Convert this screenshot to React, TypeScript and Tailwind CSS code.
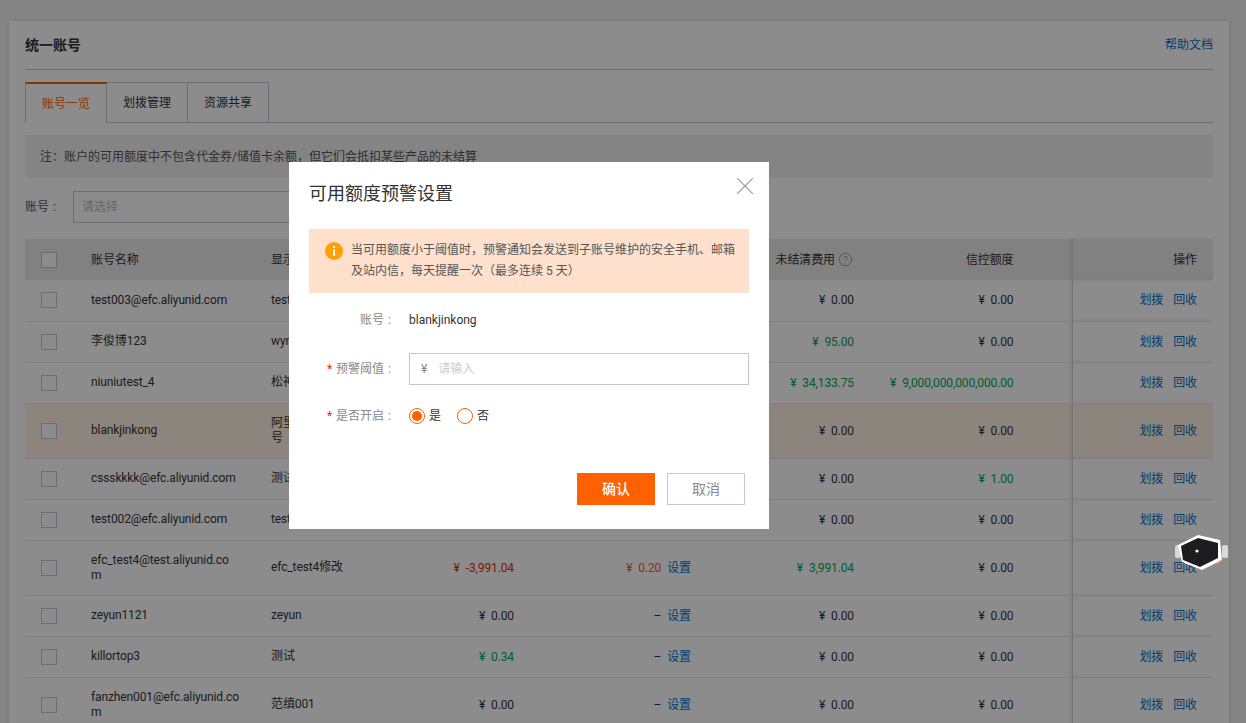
import { CircleHelp } from "lucide-react";

type Row = {
  name: string;
  display: string;
  avail: string;
  availTone?: string;
  warn: string;
  warnTone?: string;
  unpaid: string;
  unpaidTone?: string;
  credit: string;
  creditTone?: string;
  active?: boolean;
};

const green = "text-[#00a854]";
const red = "text-[#e62c00]";
const orange = "text-[#ff6000]";

const rows: Row[] = [
  { name: "test003@efc.aliyunid.com", display: "test003", avail: "0.00", warn: "–", unpaid: "0.00", credit: "0.00" },
  { name: "李俊博123", display: "wyn", avail: "0.00", warn: "–", unpaid: "95.00", unpaidTone: green, credit: "0.00" },
  { name: "niuniutest_4", display: "松神", avail: "0.00", warn: "–", unpaid: "34,133.75", unpaidTone: green, credit: "9,000,000,000,000.00", creditTone: green },
  { name: "blankjinkong", display: "阿里云账号测试号", avail: "0.00", warn: "–", unpaid: "0.00", credit: "0.00", active: true },
  { name: "cssskkkk@efc.aliyunid.com", display: "测试", avail: "0.00", warn: "–", unpaid: "0.00", credit: "1.00", creditTone: green },
  { name: "test002@efc.aliyunid.com", display: "test002", avail: "0.00", warn: "–", unpaid: "0.00", credit: "0.00" },
  { name: "efc_test4@test.aliyunid.com", display: "efc_test4修改", avail: "-3,991.04", availTone: red, warn: "0.20", warnTone: orange, unpaid: "3,991.04", unpaidTone: green, credit: "0.00" },
  { name: "zeyun1121", display: "zeyun", avail: "0.00", warn: "–", unpaid: "0.00", credit: "0.00" },
  { name: "killortop3", display: "测试", avail: "0.34", availTone: green, warn: "–", unpaid: "0.00", credit: "0.00" },
  { name: "fanzhen001@efc.aliyunid.com", display: "范缜001", avail: "0.00", warn: "–", unpaid: "0.00", credit: "0.00" },
];

function Checkbox() {
  return <div className="h-4 w-4 border border-[#c4c6cf] bg-white" />;
}

function Money({ value }: { value: string }) {
  if (value === "–") return <span>–</span>;
  return (
    <span>
      <span className="mr-[6px]">¥</span>
      {value}
    </span>
  );
}

function AccountTable() {
  return (
    <table className="w-[1188px] table-fixed text-xs tracking-[-0.12px] text-[#333]">
      <colgroup>
        <col className="w-[50px]" />
        <col className="w-[180px]" />
        <col className="w-[125px]" />
        <col className="w-[150px]" />
        <col className="w-[177px]" />
        <col className="w-[163px]" />
        <col className="w-[202px]" />
        <col className="w-[141px]" />
      </colgroup>
      <thead>
        <tr className="h-[41px] bg-[#ebebeb]">
          <th className="pl-4 font-normal"><Checkbox /></th>
          <th className="px-4 text-left font-normal">账号名称</th>
          <th className="px-4 text-left font-normal">显示名称</th>
          <th className="px-4 text-right font-normal">可用额度</th>
          <th className="px-4 text-right font-normal">预警阈值</th>
          <th className="pr-[17px] font-normal">
            <div className="flex items-center justify-end gap-[3px]">
              未结清费用
              <CircleHelp size={15} strokeWidth={1} className="text-[#777]" />
            </div>
          </th>
          <th className="pr-[58px] text-right font-normal">信控额度</th>
          <th className="border-l border-[#d4d4d4] px-4 text-right font-normal shadow-[-2px_0_3px_rgba(0,0,0,0.08)]">操作</th>
        </tr>
      </thead>
      <tbody>
        {rows.map((row) => {
          const tall = row.active || row.name.length > 25;
          return (
            <tr
              key={row.name}
              className={`border-b border-[#e6e6e6] ${tall ? "h-[55px]" : "h-[41px]"} ${row.active ? "bg-[#fff3e3]" : ""}`}
            >
              <td className="pl-4"><Checkbox /></td>
              <td className="px-4 leading-[15px] break-all">{row.name}</td>
              <td className="px-4 leading-[15px] break-all">{row.display}</td>
              <td className={`px-4 text-right ${row.availTone ?? ""}`}><Money value={row.avail} /></td>
              <td className="px-4 text-right">
                <span className={row.warnTone ?? ""}><Money value={row.warn} /></span>
                <a className="ml-[6px] text-[#0070cc]">设置</a>
              </td>
              <td className={`px-4 text-right ${row.unpaidTone ?? ""}`}><Money value={row.unpaid} /></td>
              <td className={`pr-[58px] text-right ${row.creditTone ?? ""}`}><Money value={row.credit} /></td>
              <td className="border-l border-[#d4d4d4] px-4 text-right text-[#0070cc] shadow-[-2px_0_3px_rgba(0,0,0,0.08)]">
                <a>划拨</a>
                <a className="ml-[10px]">回收</a>
              </td>
            </tr>
          );
        })}
      </tbody>
    </table>
  );
}

function InfoIcon() {
  return (
    <svg width="18" height="18" viewBox="0 0 18 18" className="mt-[2px] shrink-0">
      <circle cx="9" cy="9" r="9" fill="#ffa003" />
      <rect x="8" y="4" width="2" height="2" fill="#fff" />
      <rect x="8" y="7.5" width="2" height="6.5" fill="#fff" />
    </svg>
  );
}

function Radio({ checked, label }: { checked?: boolean; label: string }) {
  return (
    <label className="flex items-center gap-1 text-[#333]">
      <span className="flex h-4 w-4 items-center justify-center rounded-full border border-[#ff6000] bg-white">
        {checked && <span className="h-[10px] w-[10px] rounded-full bg-[#ff6000]" />}
      </span>
      {label}
    </label>
  );
}

function FormLabel({ text, required }: { text: string; required?: boolean }) {
  return (
    <div className="w-[82px] shrink-0 text-right text-[#888]">
      {required && <span className="mr-1 text-[#e62c00]">*</span>}
      {text}
      <span className="ml-1">:</span>
    </div>
  );
}

function QuotaDialog() {
  return (
    <div className="absolute inset-0 bg-black/45">
      <div className="absolute top-[162px] left-[289px] h-[367px] w-[480px] bg-white px-5 text-xs">
        <button className="absolute top-4 right-4 text-[#999]">
          <svg width="16" height="16" viewBox="0 0 16 16" fill="none" stroke="currentColor" strokeWidth="1.2">
            <path d="M0 0 16 16M16 0 0 16" />
          </svg>
        </button>
        <h2 className="pt-[21px] text-lg leading-[22px] text-[#333]">可用额度预警设置</h2>
        <div className="mt-6 flex h-16 gap-2 bg-[#fee0cc] py-[11px] pr-3 pl-4 leading-[21px] text-[#555]">
          <InfoIcon />
          <p>当可用额度小于阈值时，预警通知会发送到子账号维护的安全手机、邮箱及站内信，每天提醒一次（最多连续 5 天）</p>
        </div>
        <div className="mt-[19px] flex items-center gap-[18px] leading-4">
          <FormLabel text="账号" />
          <span className="text-[#333]">blankjinkong</span>
        </div>
        <div className="mt-[25px] flex items-center gap-[18px]">
          <FormLabel text="预警阈值" required />
          <div className="flex h-8 flex-1 items-center border border-[#c4c6cf] px-[11px]">
            <span className="text-[#888]">¥</span>
            <span className="ml-[11px] text-[#ccc]">请输入</span>
          </div>
        </div>
        <div className="mt-[23px] flex items-center gap-[18px]">
          <FormLabel text="是否开启" required />
          <div className="flex gap-4">
            <Radio checked label="是" />
            <Radio label="否" />
          </div>
        </div>
        <div className="absolute top-[311px] right-6 flex gap-3">
          <button className="h-8 w-[78px] bg-[#ff6000] text-sm font-medium text-white">确认</button>
          <button className="h-8 w-[78px] border border-[#c4c6cf] bg-white text-sm text-[#888]">取消</button>
        </div>
      </div>
    </div>
  );
}

function Widget() {
  return (
    <svg width="56" height="40" viewBox="0 0 56 40" className="absolute top-[533px] left-[1174px]">
      <rect x="1" y="12" width="6" height="13" rx="2" fill="#d8d8d8" />
      <rect x="48" y="12" width="6" height="13" rx="2" fill="#d8d8d8" />
      <path d="M24 2 46 7 48 27 28 37 8 29 4 12Z" fill="#fff" />
      <path d="M24 5 44 10 44 25 26 34 9 27 7 13Z" fill="#1d1d1f" />
      <circle cx="23" cy="18" r="1.6" fill="#fff" />
      <path d="M43 31 48 27" stroke="#ff8a3c" strokeWidth="2" strokeDasharray="2 1" />
    </svg>
  );
}

export default function App() {
  return (
    <div className="relative h-[723px] w-[1246px] overflow-hidden bg-[#f0f0f0] font-['Roboto','Noto_Sans_CJK_SC',sans-serif] text-xs">
      <div className="ml-[9px] mt-[21px] min-h-[760px] w-[1220px] bg-white px-4 shadow-[0_0_4px_rgba(0,0,0,0.1)]">
        <div className="flex h-[49px] items-center justify-between border-b border-[#c4c6cf]">
          <h1 className="text-sm font-bold text-[#333]">统一账号</h1>
          <a className="text-xs text-[#0070cc]">帮助文档</a>
        </div>

        <div className="mt-3 flex h-[41px] border-b border-[#c4c6cf] text-[#333]">
          <div className="flex h-[41px] w-[82px] items-center justify-center border-x border-t-2 border-[#c4c6cf] border-t-[#ff6000] bg-white text-[#ff6000]">账号一览</div>
          <div className="flex h-10 w-[81px] items-center justify-center border-t border-r border-[#c4c6cf]">划拨管理</div>
          <div className="flex h-10 w-[81px] items-center justify-center border-t border-r border-[#c4c6cf]">资源共享</div>
        </div>

        <div className="mt-3 flex h-[43px] items-center bg-[#f0f0f0] px-[15px] text-[#555]">
          注：账户的可用额度中不包含代金券/储值卡余额，但它们会抵扣某些产品的未结算
        </div>

        <div className="mt-[13px] flex h-8 items-center text-[#555]">
          <span className="w-12">账号<span className="ml-1">:</span></span>
          <div className="flex h-8 w-[300px] items-center border border-[#c4c6cf] px-2 text-[#bbb]">请选择</div>
        </div>

        <div className="mt-4">
          <AccountTable />
        </div>
      </div>
      <QuotaDialog />
      <Widget />
    </div>
  );
}
